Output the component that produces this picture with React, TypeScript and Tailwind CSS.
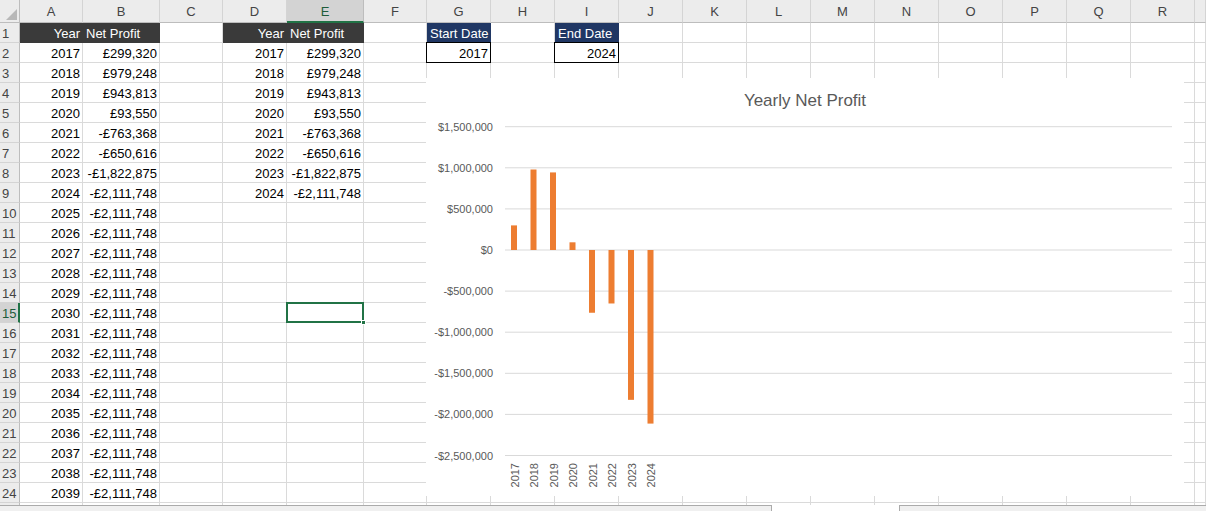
import React from "react";

const COLS = [
  { k: "A", w: "A" },
  { k: "B", w: "B" },
  { k: "C", w: "C" },
  { k: "D", w: "D" },
  { k: "E", w: "E" },
  { k: "F", w: "F" },
  { k: "G", w: "G" },
  { k: "H", w: "H" },
  { k: "I", w: "I" },
  { k: "J", w: "J" },
  { k: "K", w: "K" },
  { k: "L", w: "L" },
  { k: "M", w: "M" },
  { k: "N", w: "N" },
  { k: "O", w: "O" },
  { k: "P", w: "P" },
  { k: "Q", w: "Q" },
  { k: "R", w: "R" },
  { k: "S", w: "" },
];

const VALUES = [299320, 979248, 943813, 93550, -763368, -650616, -1822875, -2111748];

const fmt = (v: number) =>
  (v < 0 ? "-" : "") + "£" + Math.abs(v).toLocaleString("en-GB");

type CellData = {
  text?: string;
  align?: "left" | "right";
  fill?: "dark" | "navy";
  boxed?: boolean;
};

function cellFor(row: number, col: string): CellData {
  if (row === 1) {
    if (col === "A" || col === "D") return { text: "Year", align: "right", fill: "dark" };
    if (col === "B" || col === "E") return { text: "Net Profit", align: "left", fill: "dark" };
    if (col === "G") return { text: "Start Date", align: "left", fill: "navy" };
    if (col === "I") return { text: "End Date", align: "left", fill: "navy" };
    return {};
  }
  if (row === 2 && col === "G") return { text: "2017", align: "right", boxed: true };
  if (row === 2 && col === "I") return { text: "2024", align: "right", boxed: true };
  const year = 2015 + row;
  const val = VALUES[Math.min(row - 2, 7)];
  if (col === "A") return { text: String(year), align: "right" };
  if (col === "B") return { text: fmt(val), align: "right" };
  if (row <= 9 && col === "D") return { text: String(year), align: "right" };
  if (row <= 9 && col === "E") return { text: fmt(val), align: "right" };
  return {};
}

function Cell({ row, col }: { row: number; col: string }) {
  const d = cellFor(row, col);
  const active = row === 15 && col === "E";
  const fillCls =
    d.fill === "dark"
      ? "bg-[#3a3a3a] text-white border-[#3a3a3a]"
      : d.fill === "navy"
      ? "bg-[#203764] text-white border-[#203764]"
      : "bg-white text-black border-[#dadada]";
  return (
    <div
      className={`relative h-5 pt-[2px] border-r border-b flex items-center overflow-visible whitespace-nowrap ${fillCls} ${
        d.align === "right" ? "justify-end pr-[2px]" : "justify-start pl-[3px]"
      }`}
    >
      {d.text}
      {d.boxed && <div className="absolute -inset-px border border-black pointer-events-none" />}
      {active && (
        <>
          <div className="absolute -inset-px border-2 border-[#217346] z-10" />
          <div className="absolute -right-[3px] -bottom-[3px] w-[5px] h-[5px] bg-[#217346] border border-white z-10" />
        </>
      )}
    </div>
  );
}

function Chart() {
  const ticks = [
    "$1,500,000",
    "$1,000,000",
    "$500,000",
    "$0",
    "-$500,000",
    "-$1,000,000",
    "-$1,500,000",
    "-$2,000,000",
    "-$2,500,000",
  ];
  const zero = 172;
  const step = 41.1;
  return (
    <div className="absolute left-[426px] top-[78px] w-[758px] h-[418px] bg-white z-20">
      <svg width="758" height="418" viewBox="0 0 758 418" fontFamily="'Liberation Sans', Arial, sans-serif">
        <text x="379" y="28" textAnchor="middle" fontSize="17" fill="#595959">
          Yearly Net Profit
        </text>
        {ticks.map((t, i) => {
          const y = 48.7 + step * i;
          return (
            <g key={t}>
              <line x1="79" x2="746" y1={y} y2={y} stroke="#d9d9d9" strokeWidth="1" />
              <text x="67" y={y + 4} textAnchor="end" fontSize="11" fill="#595959">
                {t}
              </text>
            </g>
          );
        })}
        {VALUES.map((v, i) => {
          const h = (Math.abs(v) * step) / 500000;
          const y = v >= 0 ? zero - h : zero;
          return <rect key={i} x={85 + 19.5 * i} y={y} width="6" height={h} fill="#ed7d31" />;
        })}
        {VALUES.map((_, i) => (
          <text
            key={i}
            transform={`translate(${92.5 + 19.5 * i},385) rotate(-90)`}
            textAnchor="end"
            fontSize="11"
            fill="#595959"
          >
            {2017 + i}
          </text>
        ))}
      </svg>
    </div>
  );
}

export default function App() {
  const rows = Array.from({ length: 24 }, (_, i) => i + 1);
  return (
    <div className="w-[1206px] h-[511px] overflow-hidden bg-white flex flex-col font-['Liberation_Sans',Arial,sans-serif] text-[13px]">
      <div className="relative">
        <div className="grid grid-cols-[20px_63px_77px_63px_64px_77px_63px_repeat(12,64px)_1fr]">
          {/* corner */}
          <div className="h-[23px] bg-[#ececec] border-r border-b border-[#bdbdbd] flex items-end justify-end p-[2px]">
            <svg width="11" height="11" viewBox="0 0 11 11">
              <polygon points="11,0 11,11 0,11" fill="#b8b8b8" />
            </svg>
          </div>
          {COLS.map((c) =>
            c.k === "E" ? (
              <div
                key={c.k}
                className="h-[23px] pt-[2px] bg-[#d3d3d3] border-r border-[#bdbdbd] border-b-2 border-b-[#217346] flex items-center justify-center text-[#1e5c3a]"
              >
                {c.w}
              </div>
            ) : (
              <div
                key={c.k}
                className="h-[23px] pt-[2px] bg-[#ececec] border-r border-b border-r-[#d4d4d4] border-b-[#bdbdbd] flex items-center justify-center text-[#444]"
              >
                {c.w}
              </div>
            )
          )}
          {rows.map((r) => (
            <React.Fragment key={r}>
              {r === 15 ? (
                <div className="h-5 pt-[2px] bg-[#d3d3d3] border-b border-b-[#d4d4d4] border-r-2 border-r-[#217346] flex items-center pl-[2px] text-[#1e5c3a]">
                  {r}
                </div>
              ) : (
                <div className="h-5 pt-[2px] bg-[#ececec] border-b border-r border-b-[#d4d4d4] border-r-[#bdbdbd] flex items-center pl-[2px] text-[#444]">
                  {r}
                </div>
              )}
              {COLS.map((c) => (
                <Cell key={c.k} row={r} col={c.k} />
              ))}
            </React.Fragment>
          ))}
          <div className="h-[2px] bg-[#ececec] border-r border-[#bdbdbd]" />
          {COLS.map((c) => (
            <div key={c.k} className="h-[2px] border-r border-[#dadada]" />
          ))}
        </div>
        <Chart />
      </div>
      <div className="flex h-[6px]">
        <div className="w-[772px] bg-[#f0f0f0] border-t border-r border-[#ababab]" />
        <div className="w-[127px] bg-white" />
        <div className="flex-1 bg-[#f0f0f0] border-t border-l border-[#ababab]" />
      </div>
    </div>
  );
}
